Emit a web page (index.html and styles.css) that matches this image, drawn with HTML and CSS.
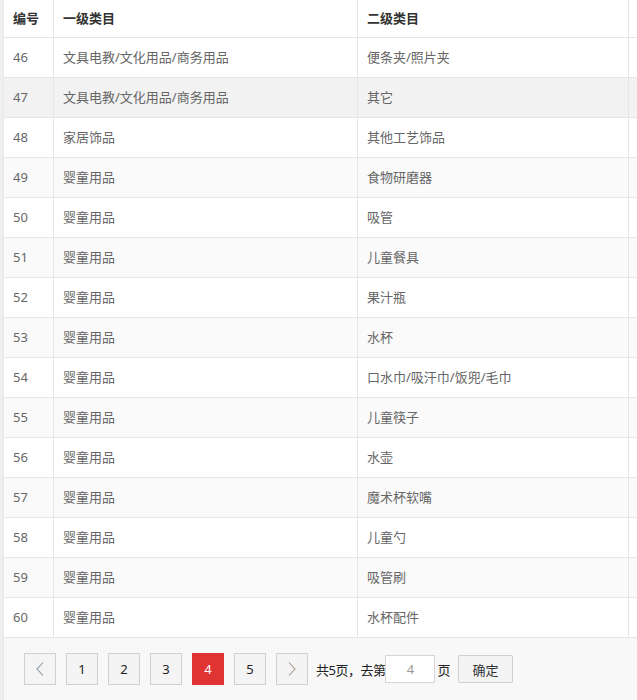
FILE: index.html
```html
<!DOCTYPE html>
<html lang="zh">
<head>
<meta charset="utf-8">
<link rel="stylesheet" href="styles.css">
</head>
<body>
<div class="page">
  <div class="table-box">
    <table class="grid">
      <colgroup>
        <col class="c1"><col class="c2"><col class="c3"><col class="c4">
      </colgroup>
      <thead>
        <tr><th>编号</th><th>一级类目</th><th>二级类目</th><th></th></tr>
      </thead>
      <tbody>
        <tr><td>46</td><td>文具电教/文化用品/商务用品</td><td>便条夹/照片夹</td><td></td></tr>
        <tr class="hover"><td>47</td><td>文具电教/文化用品/商务用品</td><td>其它</td><td></td></tr>
        <tr><td>48</td><td>家居饰品</td><td>其他工艺饰品</td><td></td></tr>
        <tr class="even"><td>49</td><td>婴童用品</td><td>食物研磨器</td><td></td></tr>
        <tr><td>50</td><td>婴童用品</td><td>吸管</td><td></td></tr>
        <tr class="even"><td>51</td><td>婴童用品</td><td>儿童餐具</td><td></td></tr>
        <tr><td>52</td><td>婴童用品</td><td>果汁瓶</td><td></td></tr>
        <tr class="even"><td>53</td><td>婴童用品</td><td>水杯</td><td></td></tr>
        <tr><td>54</td><td>婴童用品</td><td>口水巾/吸汗巾/饭兜/毛巾</td><td></td></tr>
        <tr class="even"><td>55</td><td>婴童用品</td><td>儿童筷子</td><td></td></tr>
        <tr><td>56</td><td>婴童用品</td><td>水壶</td><td></td></tr>
        <tr class="even"><td>57</td><td>婴童用品</td><td>魔术杯软嘴</td><td></td></tr>
        <tr><td>58</td><td>婴童用品</td><td>儿童勺</td><td></td></tr>
        <tr class="even"><td>59</td><td>婴童用品</td><td>吸管刷</td><td></td></tr>
        <tr><td>60</td><td>婴童用品</td><td>水杯配件</td><td></td></tr>
      </tbody>
    </table>
  </div>
  <div class="pager">
    <a class="pg arrow">
      <svg width="10" height="16" viewBox="0 0 10 16"><path d="M8 1.5 L2 8 L8 14.5" fill="none" stroke="#8a97a8" stroke-width="1.1"/></svg>
    </a>
    <a class="pg">1</a>
    <a class="pg">2</a>
    <a class="pg">3</a>
    <a class="pg cur">4</a>
    <a class="pg">5</a>
    <a class="pg arrow last">
      <svg width="10" height="16" viewBox="0 0 10 16"><path d="M2 1.5 L8 8 L2 14.5" fill="none" stroke="#a89a8a" stroke-width="1.1"/></svg>
    </a>
    <span class="skip">共5页，去第</span>
    <input class="goto" type="text" value="4">
    <span class="skip">页</span>
    <button class="ok">确定</button>
  </div>
</div>
</body>
</html>
```
FILE: styles.css
```css
html, body {
  margin: 0;
  padding: 0;
  background: #fff;
  overflow: hidden;
}
body {
  font-family: "Noto Sans", "Noto Sans CJK SC", sans-serif;
  font-size: 13px;
  color: #666;
}
.page {
  width: 637px;
  height: 700px;
  border-left: 3px solid #efefef;
  box-sizing: border-box;
  overflow: hidden;
}
.table-box {
  border-left: 1px solid #e6e6e6;
  overflow: hidden;
  width: 700px;
}
.grid {
  border-collapse: separate;
  border-spacing: 0;
  table-layout: fixed;
  width: 680px;
}
.c1 { width: 50px; }
.c2 { width: 304px; }
.c3 { width: 271px; }
.c4 { width: 55px; }
.grid th, .grid td {
  padding: 0 9px;
  border-right: 1px solid #e6e6e6;
  border-bottom: 1px solid #e6e6e6;
  text-align: left;
  white-space: nowrap;
  overflow: hidden;
}
.grid th {
  line-height: 37px;
  height: 37px;
  font-weight: bold;
  color: #333;
  background: #fff;
}
.grid td {
  line-height: 39px;
  height: 39px;
}
.grid tr.even td { background: #fafafa; }
.grid tr.hover td { background: #f2f2f2; }
.pager {
  background: #f8f8f8;
  height: 62px;
  display: flex;
  align-items: center;
  padding: 0 0 0 20px;
  border-left: 1px solid #e6e6e6;
}
.pg {
  width: 30px;
  height: 30px;
  border: 1px solid #d0d0d0;
  background: #f4f4f4;
  color: #222;
  display: flex;
  align-items: center;
  justify-content: center;
  margin-right: 10px;
  font-size: 13px;
}
.pg.cur {
  background: #e03434;
  border-color: #e03434;
  color: #fff;
}
.pg.last { margin-right: 8px; }
.skip {
  color: #222;
  font-size: 13px;
  letter-spacing: -0.5px;
}
.goto {
  width: 50px;
  height: 28px;
  box-sizing: border-box;
  border: 1px solid #d6d6d6;
  background: #fff;
  text-align: center;
  color: #999;
  font-family: "Noto Sans", sans-serif;
  font-size: 13px;
  margin: 0 2px 0 0;
  padding: 0;
  outline: none;
}
.ok {
  margin-left: 8px;
  width: 55px;
  height: 28px;
  border: 1px solid #cfcfcf;
  border-radius: 2px;
  background: #f4f4f4;
  color: #333;
  font-family: "Noto Sans CJK SC", sans-serif;
  font-size: 13px;
  padding: 0;
}
```
